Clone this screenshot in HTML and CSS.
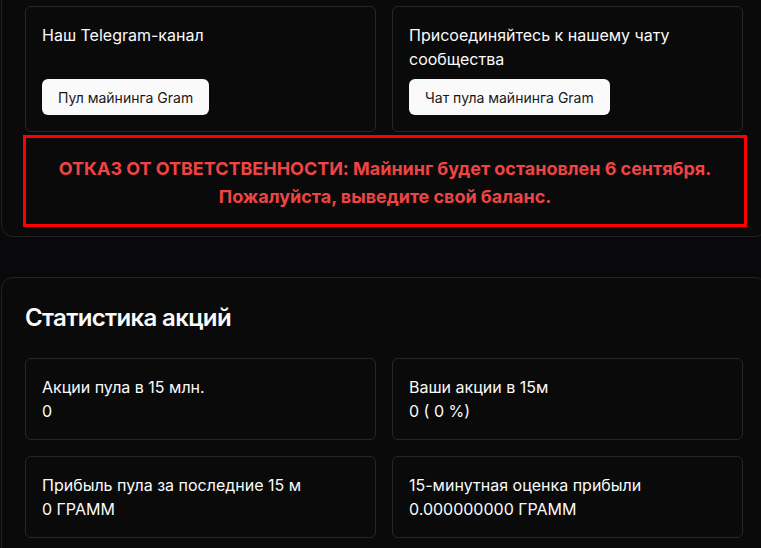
FILE: index.html
```html
<!DOCTYPE html>
<html lang="ru">
<head>
<meta charset="utf-8">
<title>Gram Pool</title>
<link rel="stylesheet" href="styles.css">
</head>
<body>
<div class="page">
  <section class="panel panel-top">
    <div class="grid">
      <div class="card link-card">
        <p class="card-text">Наш Telegram-канал</p>
        <a class="btn" href="#">Пул майнинга Gram</a>
      </div>
      <div class="card link-card">
        <p class="card-text">Присоединяйтесь к нашему чату сообщества</p>
        <a class="btn" href="#">Чат пула майнинга Gram</a>
      </div>
    </div>
    <div class="disclaimer">ОТКАЗ ОТ ОТВЕТСТВЕННОСТИ: Майнинг будет остановлен 6 сентября.<br>Пожалуйста, выведите свой баланс.</div>
  </section>

  <section class="panel">
    <h2 class="panel-title">Статистика акций</h2>
    <div class="grid">
      <div class="card">
        <p class="card-text">Акции пула в 15 млн.</p>
        <p class="card-text">0</p>
      </div>
      <div class="card">
        <p class="card-text">Ваши акции в 15м</p>
        <p class="card-text">0 ( 0 %)</p>
      </div>
      <div class="card">
        <p class="card-text">Прибыль пула за последние 15 м</p>
        <p class="card-text">0 ГРАММ</p>
      </div>
      <div class="card">
        <p class="card-text">15-минутная оценка прибыли</p>
        <p class="card-text">0.000000000 ГРАММ</p>
      </div>
    </div>
  </section>
</div>
</body>
</html>
```

FILE: styles.css
```css
html, body {
  margin: 0;
  padding: 0;
  background: #09090b;
  overflow: hidden;
}

body {
  font-family: "Inter", "Noto Sans", sans-serif;
  color: #fafafa;
}

.page {
  width: 766px;
  margin-left: 1px;
}

.panel {
  box-sizing: border-box;
  background: #0a0a0b;
  border: 1px solid #232326;
  border-radius: 12px;
  padding: 24px 23px 24px 23px;
}

.panel-top {
  margin-top: -19px;
  padding-bottom: 9px;
  margin-bottom: 40px;
}

.panel-title {
  margin: 0 0 24px 0;
  font-size: 24px;
  line-height: 32px;
  font-weight: 600;
  letter-spacing: -0.65px;
  color: #fafafa;
}

.grid {
  display: grid;
  grid-template-columns: 1fr 1fr;
  gap: 16px;
}

.card {
  border: 1px solid #27272a;
  border-radius: 6px;
  padding: 16px;
  display: flex;
  flex-direction: column;
}

.link-card {
  gap: 8px;
  justify-content: space-between;
  align-items: flex-start;
}

.card-text {
  margin: 0;
  font-size: 16px;
  line-height: 24px;
  color: #fafafa;
}

.btn {
  display: inline-flex;
  align-items: center;
  height: 36px;
  padding: 0 16px;
  border-radius: 6px;
  background: #fafafa;
  color: #18181b;
  font-size: 14px;
  font-weight: 400;
  text-decoration: none;
}

.disclaimer {
  margin: 3px -4px 0 -2px;
  border: 3px solid #ff0000;
  padding: 17px 16px 13px 16px;
  text-align: center;
  color: #ef4444;
  font-size: 18px;
  line-height: 28px;
  font-weight: 700;
  letter-spacing: -0.03px;
}
```
